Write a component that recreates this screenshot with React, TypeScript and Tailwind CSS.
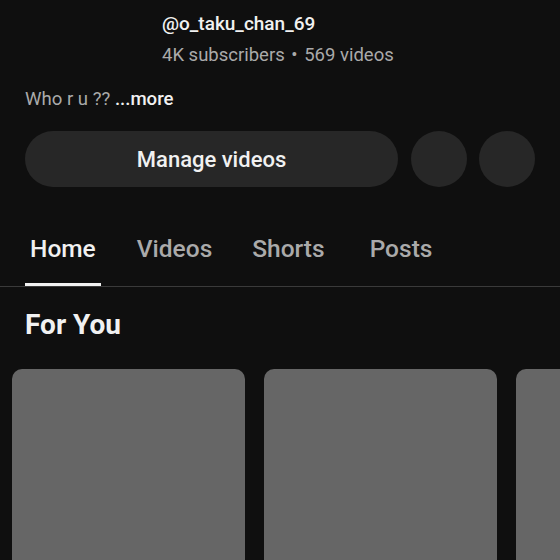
const tabs = [
  { label: 'Home', cls: 'ml-0' },
  { label: 'Videos', cls: 'ml-[31px]' },
  { label: 'Shorts', cls: 'ml-[30px]' },
  { label: 'Posts', cls: 'ml-[35px]' },
];

export default function App() {
  return (
    <div
      className="w-[560px] h-[560px] overflow-hidden bg-[#0f0f0f] text-white"
      style={{ fontFamily: 'Roboto, "Liberation Sans", sans-serif' }}
    >
      {/* channel info */}
      <div className="pl-[162px] pt-[12px]">
        <div className="text-[19px] leading-[24px] font-medium text-[#f1f1f1]">@o_taku_chan_69</div>
        <div className="mt-[7px] text-[18.5px] leading-[24px] text-[#aaaaaa]">
          4K subscribers <span className="mx-[2px]">•</span> 569 videos
        </div>
      </div>

      <div className="px-[25px] mt-[21px] text-[18.6px] leading-[22px] text-[#aaaaaa]">
        Who r u ?? <span className="font-medium text-[#f1f1f1]">...more</span>
      </div>

      {/* actions */}
      <div className="flex items-center gap-[13px] px-[25px] mt-[21px]">
        <button className="flex-1 h-[56px] rounded-full bg-[#272727] text-[22px] font-medium text-[#f1f1f1]">
          Manage videos
        </button>
        <div className="flex gap-[12px]">
          <div className="w-[56px] h-[56px] rounded-full bg-[#272727]" />
          <div className="w-[56px] h-[56px] rounded-full bg-[#272727]" />
        </div>
      </div>

      {/* tabs */}
      <div className="mt-[36px] border-b border-[#3a3a3a]">
        <div className="flex px-[25px]">
          {tabs.map((t, i) => (
            <div
              key={t.label}
              className={`${t.cls} px-[5px] pt-[11px] pb-[19px] text-[24.5px] leading-[30px] font-medium border-b-[3px] ${
                i === 0 ? 'text-[#f1f1f1] border-[#f1f1f1]' : 'text-[#aaaaaa] border-transparent'
              }`}
            >
              {t.label}
            </div>
          ))}
        </div>
      </div>

      <h2 className="px-[25px] mt-[22px] text-[28px] leading-[32px] font-bold text-[#f1f1f1]">For You</h2>

      {/* shelf */}
      <div className="flex gap-[19px] pl-[12px] mt-[28px]">
        {[0, 1, 2].map((i) => (
          <div key={i} className="shrink-0 w-[233px] h-[220px] rounded-[10px] bg-[#666666]" />
        ))}
      </div>
    </div>
  );
}
